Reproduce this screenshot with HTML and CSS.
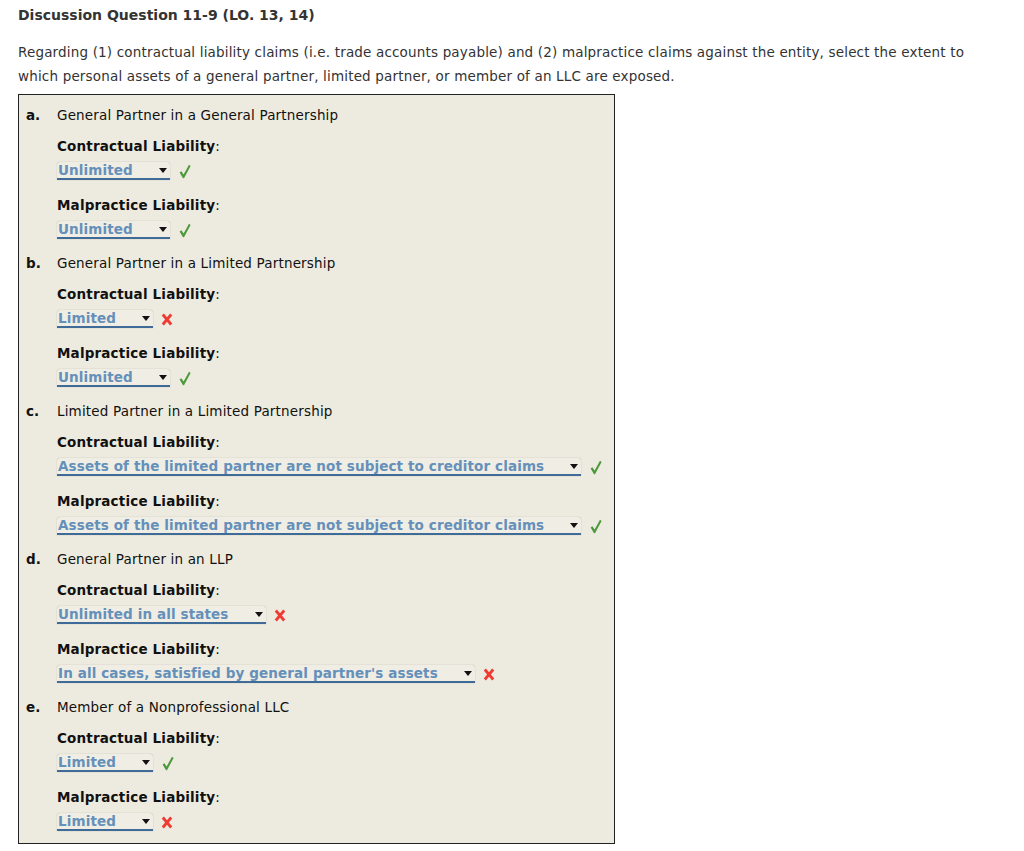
FILE: index.html
```html
<!DOCTYPE html>
<html>
<head>
<meta charset="utf-8">
<link rel="stylesheet" href="styles.css">
</head>
<body>
<h1 class="title">Discussion Question 11-9 (LO. 13, 14)</h1>
<p class="intro">Regarding (1) contractual liability claims (i.e. trade accounts payable) and (2) malpractice claims against the entity, select the extent to which personal assets of a general partner, limited partner, or member of an LLC are exposed.</p>
<div class="box">
  <div class="item">
    <div class="letter">a.</div>
    <div class="content">
      <div class="label">General Partner in a General Partnership</div>
      <div class="field-head"><b>Contractual Liability</b>:</div>
      <div class="answer"><span class="select">Unlimited<span class="arrow"></span></span><svg class="mark" width="12" height="15" viewBox="0 0 12 15"><path class="ok" d="M0.6 8.4 L2.4 7.2 L4.6 10.4 L10 0.8 L11.6 2 L5 14.2 L4 14.2 Z"/></svg></div>
      <div class="field-head"><b>Malpractice Liability</b>:</div>
      <div class="answer"><span class="select">Unlimited<span class="arrow"></span></span><svg class="mark" width="12" height="15" viewBox="0 0 12 15"><path class="ok" d="M0.6 8.4 L2.4 7.2 L4.6 10.4 L10 0.8 L11.6 2 L5 14.2 L4 14.2 Z"/></svg></div>
    </div>
  </div>
  <div class="item">
    <div class="letter">b.</div>
    <div class="content">
      <div class="label">General Partner in a Limited Partnership</div>
      <div class="field-head"><b>Contractual Liability</b>:</div>
      <div class="answer"><span class="select">Limited<span class="arrow"></span></span><svg class="mark x" width="12" height="13" viewBox="0 0 12 13"><path class="bad" d="M1.8 1.5 L10.2 11.5 M10.2 1.5 L1.8 11.5"/></svg></div>
      <div class="field-head"><b>Malpractice Liability</b>:</div>
      <div class="answer"><span class="select">Unlimited<span class="arrow"></span></span><svg class="mark" width="12" height="15" viewBox="0 0 12 15"><path class="ok" d="M0.6 8.4 L2.4 7.2 L4.6 10.4 L10 0.8 L11.6 2 L5 14.2 L4 14.2 Z"/></svg></div>
    </div>
  </div>
  <div class="item">
    <div class="letter">c.</div>
    <div class="content">
      <div class="label">Limited Partner in a Limited Partnership</div>
      <div class="field-head"><b>Contractual Liability</b>:</div>
      <div class="answer"><span class="select">Assets of the limited partner are not subject to creditor claims<span class="arrow"></span></span><svg class="mark" width="12" height="15" viewBox="0 0 12 15"><path class="ok" d="M0.6 8.4 L2.4 7.2 L4.6 10.4 L10 0.8 L11.6 2 L5 14.2 L4 14.2 Z"/></svg></div>
      <div class="field-head"><b>Malpractice Liability</b>:</div>
      <div class="answer"><span class="select">Assets of the limited partner are not subject to creditor claims<span class="arrow"></span></span><svg class="mark" width="12" height="15" viewBox="0 0 12 15"><path class="ok" d="M0.6 8.4 L2.4 7.2 L4.6 10.4 L10 0.8 L11.6 2 L5 14.2 L4 14.2 Z"/></svg></div>
    </div>
  </div>
  <div class="item">
    <div class="letter">d.</div>
    <div class="content">
      <div class="label">General Partner in an LLP</div>
      <div class="field-head"><b>Contractual Liability</b>:</div>
      <div class="answer"><span class="select">Unlimited in all states<span class="arrow"></span></span><svg class="mark x" width="12" height="13" viewBox="0 0 12 13"><path class="bad" d="M1.8 1.5 L10.2 11.5 M10.2 1.5 L1.8 11.5"/></svg></div>
      <div class="field-head"><b>Malpractice Liability</b>:</div>
      <div class="answer"><span class="select">In all cases, satisfied by general partner's assets<span class="arrow"></span></span><svg class="mark x" width="12" height="13" viewBox="0 0 12 13"><path class="bad" d="M1.8 1.5 L10.2 11.5 M10.2 1.5 L1.8 11.5"/></svg></div>
    </div>
  </div>
  <div class="item">
    <div class="letter">e.</div>
    <div class="content">
      <div class="label">Member of a Nonprofessional LLC</div>
      <div class="field-head"><b>Contractual Liability</b>:</div>
      <div class="answer"><span class="select">Limited<span class="arrow"></span></span><svg class="mark" width="12" height="15" viewBox="0 0 12 15"><path class="ok" d="M0.6 8.4 L2.4 7.2 L4.6 10.4 L10 0.8 L11.6 2 L5 14.2 L4 14.2 Z"/></svg></div>
      <div class="field-head"><b>Malpractice Liability</b>:</div>
      <div class="answer"><span class="select">Limited<span class="arrow"></span></span><svg class="mark x" width="12" height="13" viewBox="0 0 12 13"><path class="bad" d="M1.8 1.5 L10.2 11.5 M10.2 1.5 L1.8 11.5"/></svg></div>
    </div>
  </div>
</div>
</body>
</html>
```
FILE: styles.css
```css
body {
  margin: 0;
  padding: 6px 18px;
  font-family: "DejaVu Sans", Verdana, sans-serif;
  font-size: 13.5px;
  letter-spacing: 0.17px;
  color: #222;
  background: #fff;
}
.title {
  margin: 0;
  font-size: 14px;
  letter-spacing: 0;
  line-height: 18px;
  font-weight: bold;
  color: #333;
}
.intro {
  margin: 16px 0 0;
  line-height: 24px;
  color: #333;
}
.box {
  margin-top: 6px;
  width: 595px;
  border: 1px solid #222;
  background: #edebdf;
  padding: 11px 0 12px;
}
.item {
  display: flex;
  margin-bottom: 15px;
}
.item:last-child {
  margin-bottom: 0;
}
.letter {
  width: 31px;
  padding-left: 7px;
  font-weight: bold;
  line-height: 18px;
  color: #111;
  letter-spacing: 0;
}
.content {
  flex: 1;
}
.label {
  line-height: 18px;
  color: #111;
}
.field-head {
  margin-top: 13px;
  line-height: 18px;
  color: #111;
}
.item .field-head ~ .field-head {
  margin-top: 16px;
}
.answer {
  margin-top: 7px;
  display: flex;
  align-items: center;
  height: 18px;
}
.select {
  position: relative;
  display: inline-block;
  height: 16px;
  line-height: 16px;
  padding: 0 37px 0 1px;
  font-weight: bold;
  letter-spacing: 0.12px;
  color: #6590ba;
  border-bottom: 2px solid #3f6b99;
  border-radius: 3px 3px 0 0;
  box-shadow: 0 0 1px rgba(0, 0, 0, 0.35);
  background: #efede4;
}
.arrow {
  position: absolute;
  right: 3px;
  top: 6px;
  width: 0;
  height: 0;
  border-left: 4px solid transparent;
  border-right: 4px solid transparent;
  border-top: 5px solid #111;
}
.mark {
  margin-left: 9px;
  display: block;
}
.mark.x {
  margin-left: 8px;
}
.ok {
  fill: #4c9a3c;
  stroke: none;
}
.bad {
  fill: none;
  stroke: #ee3b33;
  stroke-width: 2.8;
}
```
